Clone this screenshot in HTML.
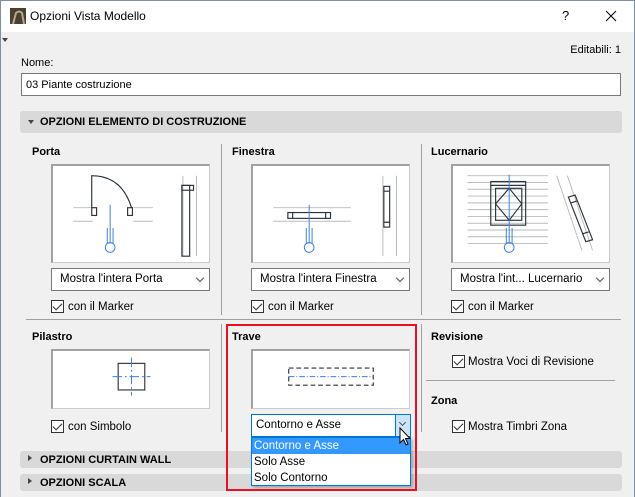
<!DOCTYPE html>
<html><head><meta charset="utf-8"><style>
*{margin:0;padding:0;box-sizing:border-box}
body{width:635px;height:497px;background:#f0f0f0;font-family:"Liberation Sans",sans-serif;font-size:11px;color:#000;position:relative;overflow:hidden}
.a{position:absolute}
.frame{left:0;top:0;width:635px;height:497px;border:1px solid #7a8fa8;border-bottom:none}
.title{left:1px;top:1px;width:633px;height:31px;background:#fff}
.b{font-weight:bold}
.hdr{left:20px;width:602px;background:#d9d9d9;border-radius:3px;font-weight:bold;font-size:11px}
.box{background:#fff;border:1px solid #ccc;border-top:2px solid #a0a0a0;border-left:2px solid #a0a0a0}
.sel{background:#fff;border:1px solid #7a7a7a;height:23px;padding:4px 0 0 8px;font-size:11.5px}
.sel:after{content:"";position:absolute;right:6px;top:6px;width:5px;height:5px;border-right:1px solid #555;border-bottom:1px solid #555;transform:rotate(45deg)}
.cb{width:13px;height:13px;border:1px solid #333;background:#fff}
.cb:after{content:"";position:absolute;left:3px;top:0px;width:4px;height:8px;border-right:1.3px solid #333;border-bottom:1.3px solid #333;transform:rotate(45deg)}
.lab{font-size:11.5px}
.vl{width:1px;background:#a0a0a0}
.hl{height:1px;background:#a0a0a0}
</style></head><body>
<div class="a title"></div>
<div class="a frame"></div>
<svg class="a" style="left:10px;top:8px" width="16" height="16"><rect width="16" height="16" fill="#4a4030"/><path d="M3 16 L6 5 Q9 2 12 5 L14 16" stroke="#b8a888" stroke-width="2" fill="none"/></svg>
<div class="a" style="left:30px;top:9px;font-size:12px">Opzioni Vista Modello</div>
<div class="a" style="left:562px;top:8px;font-size:13px">?</div>
<svg class="a" style="left:605px;top:10px" width="12" height="12"><path d="M1 1L11 11M11 1L1 11" stroke="#000" stroke-width="1"/></svg>
<div class="a" style="left:2px;top:38px;border-left:3px solid transparent;border-right:3px solid transparent;border-top:4px solid #444"></div>
<div class="a" style="right:14px;top:44px;font-size:11px">Editabili: 1</div>
<div class="a" style="left:21px;top:57px">Nome:</div>
<div class="a" style="left:21px;top:73px;width:600px;height:23px;background:#fff;border:1px solid #7a7a7a;padding:5px 0 0 4px;font-size:11px">03 Piante costruzione</div>
<div class="a hdr" style="top:111px;height:22px;padding:5px 0 0 20px">OPZIONI ELEMENTO DI COSTRUZIONE</div>
<div class="a" style="left:28px;top:120px;border-left:3px solid transparent;border-right:3px solid transparent;border-top:4px solid #444"></div>

<div class="a b" style="left:32px;top:146px">Porta</div>
<div class="a b" style="left:232px;top:146px">Finestra</div>
<div class="a b" style="left:431px;top:146px">Lucernario</div>
<div class="a vl" style="left:221px;top:144px;height:171px"></div>
<div class="a vl" style="left:421px;top:144px;height:171px"></div>

<svg class="a box" style="left:51px;top:164px" width="159" height="99" viewBox="0 0 159 99">
<g stroke="#bbb" fill="none"><path d="M20 43H40M20 57H40M82 43H102M82 57H102M133 10V93M147 10V93"/></g>
<g stroke="#2b3540" fill="none" stroke-width="1.2"><path d="M39 43V10Q70 10 80 43"/><rect x="39" y="43" width="5" height="8"/><rect x="76" y="43" width="5" height="8"/><rect x="132" y="20" width="8" height="73"/><rect x="132" y="20" width="12" height="5"/></g>
<g stroke="#3a7fe0" fill="none"><path d="M58 40V80M55 64V80M61 64V80"/><circle cx="58" cy="84" r="5"/></g></svg>
<svg class="a box" style="left:251px;top:164px" width="159" height="99" viewBox="0 0 159 99">
<g stroke="#bbb" fill="none"><path d="M20 43H100M20 57H100M133 10V93M147 10V93"/></g>
<g stroke="#2b3540" fill="none" stroke-width="1.2"><rect x="35" y="48" width="44" height="6"/><path d="M40 48V54M74 48V54"/><rect x="134" y="21" width="6" height="42"/><path d="M134 26H140M134 58H140"/></g>
<g stroke="#3a7fe0" fill="none"><path d="M57 40V80M54 64V80M60 64V80"/><circle cx="57" cy="84" r="5"/></g></svg>
<svg class="a box" style="left:451px;top:164px" width="159" height="99" viewBox="0 0 159 99">
<g stroke="#bbb" fill="none"><path d="M14 10H97M14 17H97M14 24H97M14 31H97M14 38H97M14 45H97M14 52H97M14 59H97M14 66H97M14 73H97M14 80H97M106 10L132 87M117 10L143 87"/></g>
<g stroke="#2b3540" fill="none" stroke-width="1.2"><rect x="38" y="16" width="36" height="45"/><path d="M38 20H74"/><rect x="43" y="23" width="27" height="33"/><path d="M57 23L43 39L57 56L70 39Z"/><path d="M118 32L125 30L143 76L136 78Z"/><path d="M121 38L127 36M132 70L139 68"/></g>
<g stroke="#3a7fe0" fill="none"><path d="M57 9V80M54 64V80M60 64V80"/><circle cx="57" cy="84" r="5"/></g></svg>

<div class="a sel" style="left:51px;top:268px;width:159px">Mostra l'intera Porta</div>
<div class="a sel" style="left:251px;top:268px;width:159px">Mostra l'intera Finestra</div>
<div class="a sel" style="left:451px;top:268px;width:159px">Mostra l'int... Lucernario</div>
<div class="a cb" style="left:51px;top:300px"></div><div class="a lab" style="left:68px;top:301px">con il Marker</div>
<div class="a cb" style="left:251px;top:300px"></div><div class="a lab" style="left:268px;top:301px">con il Marker</div>
<div class="a cb" style="left:451px;top:300px"></div><div class="a lab" style="left:468px;top:301px">con il Marker</div>
<div class="a hl" style="left:26px;top:319px;width:595px"></div>

<div class="a b" style="left:32px;top:331px">Pilastro</div>
<div class="a b" style="left:232px;top:331px">Trave</div>
<div class="a b" style="left:431px;top:331px">Revisione</div>
<div class="a vl" style="left:221px;top:324px;height:108px"></div>
<div class="a vl" style="left:421px;top:324px;height:108px"></div>
<svg class="a box" style="left:51px;top:349px" width="159" height="60" viewBox="0 0 159 60">
<rect x="66" y="13" width="28" height="28" fill="none" stroke="#2b3540" stroke-width="1.2"/>
<path d="M60 27H100M80 7V47" stroke="#3a7fe0" stroke-dasharray="10 3 2 3"/></svg>
<svg class="a box" style="left:251px;top:349px" width="159" height="60" viewBox="0 0 159 60">
<rect x="35" y="18" width="89" height="18" fill="none" stroke="#2b3540" stroke-width="1.2" stroke-dasharray="5 3"/>
<path d="M35 27H124" stroke="#3a7fe0" stroke-dasharray="6 2 1 2"/></svg>
<div class="a cb" style="left:51px;top:420px"></div><div class="a lab" style="left:68px;top:421px">con Simbolo</div>
<div class="a cb" style="left:452px;top:355px"></div><div class="a lab" style="left:468px;top:356px">Mostra Voci di Revisione</div>
<div class="a hl" style="left:426px;top:380px;width:189px"></div>
<div class="a b" style="left:431px;top:395px">Zona</div>
<div class="a cb" style="left:452px;top:420px"></div><div class="a lab" style="left:468px;top:421px">Mostra Timbri Zona</div>

<div class="a hdr" style="top:451px;height:17px;padding:3px 0 0 20px">OPZIONI CURTAIN WALL</div>
<div class="a" style="left:28px;top:455px;border-top:3px solid transparent;border-bottom:3px solid transparent;border-left:4px solid #444"></div>
<div class="a hdr" style="top:474px;height:17px;padding:3px 0 0 20px">OPZIONI SCALA</div>
<div class="a" style="left:28px;top:478px;border-top:3px solid transparent;border-bottom:3px solid transparent;border-left:4px solid #444"></div>

<div class="a" style="left:251px;top:414px;width:160px;height:23px;background:#fff;border:1px solid #0078d7;padding:4px 0 0 4px;font-size:11.5px">Contorno e Asse</div>
<div class="a" style="left:395px;top:414px;width:16px;height:23px;background:#cce4f7;border:1px solid #0078d7"></div>
<div class="a" style="left:400px;top:420px;width:5px;height:5px;border-right:1px solid #555;border-bottom:1px solid #555;transform:rotate(45deg)"></div>
<div class="a" style="left:251px;top:437px;width:160px;height:49px;background:#fff;border:1px solid #0078d7;font-size:11.5px;line-height:16px;box-shadow:2px 2px 3px rgba(0,0,0,.25)">
<div style="background:#3399ff;color:#fff;padding-left:2px">Contorno e Asse</div>
<div style="padding-left:2px">Solo Asse</div>
<div style="padding-left:2px">Solo Contorno</div></div>
<svg class="a" style="left:399px;top:427px" width="14" height="20"><path d="M1 1V16L4.5 12.5L7 18L9 17L6.5 11.5H11Z" fill="#fff" stroke="#000" stroke-width="1"/></svg>
<div class="a" style="left:226px;top:324px;width:191px;height:167px;border:2px solid #e81123"></div>
</body></html>
